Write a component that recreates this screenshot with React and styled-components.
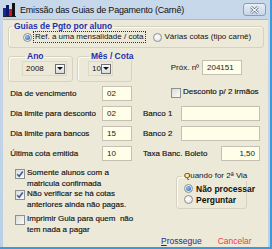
import styled, { createGlobalStyle } from 'styled-components'

const GlobalStyle = createGlobalStyle`
  html, body {
    margin: 0;
    padding: 0;
    overflow: hidden;
    font-family: 'Liberation Sans', Arial, sans-serif;
  }
`

const Window = styled.div`
  width: 272px;
  height: 249px;
  box-sizing: border-box;
  background: linear-gradient(#c8d8eb, #bccfe6);
  border-right: 2px solid #3f98d8;
  border-bottom: 2px solid #3f98d8;
  display: flex;
  flex-direction: column;
  overflow: hidden;
`

const TitleBar = styled.div`
  height: 19px;
  flex-shrink: 0;
  display: flex;
  align-items: center;
  padding-left: 3px;
`

const Caption = styled.span`
  margin-left: 4px;
  font-size: 9px;
  letter-spacing: -0.2px;
  color: #111;
`

const CloseButton = styled.div`
  margin-left: auto;
  margin-right: 4px;
  width: 21px;
  height: 11px;
  border: 1px solid #8c9db3;
  border-radius: 3px;
  background: linear-gradient(#e6eef7, #c7d5e7);
  display: flex;
  align-items: center;
  justify-content: center;
`

const Body = styled.div`
  flex: 1;
  min-height: 0;
  margin: 0 2px 0 3px;
  background: #ece9d8;
  border-top: 1px solid #aab9cc;
  padding: 1px 4px 0 5px;
  display: flex;
  flex-direction: column;
  font-size: 8px;
  color: #111;
  white-space: nowrap;
`

const Group = styled.fieldset`
  margin: 0;
  padding: 0;
  border: 1px solid #d6d2c3;
  border-radius: 3px;
  box-shadow: inset 1px 1px 0 #fbfaf5;
  min-width: 0;
`

const Legend = styled.legend`
  padding: 0 2px;
  margin-left: ${(p) => p.$offset ?? 3}px;
  font-size: ${(p) => (p.$blue ? '8.5px' : '8px')};
  font-weight: ${(p) => (p.$blue ? 'bold' : 'normal')};
  color: ${(p) => (p.$blue ? '#1d2fb0' : '#111')};
  line-height: 10px;
  white-space: nowrap;
`

const RadioRow = styled.div`
  display: flex;
  align-items: center;
  padding: 0 0 4px 14px;
  height: 12px;
`

const RadioItem = styled.label`
  display: flex;
  align-items: center;
  margin-left: ${(p) => p.$gap || 0}px;
  font-weight: ${(p) => (p.$bold ? 'bold' : 'normal')};
  font-size: ${(p) => (p.$bold ? '8.5px' : '8px')};
  height: 11px;
`

const Circle = styled.span`
  width: 9px;
  height: 9px;
  border-radius: 50%;
  border: 1px solid #8e8f8f;
  background: radial-gradient(circle at 40% 40%, #ffffff, #dcdcdc);
  box-sizing: border-box;
  display: flex;
  align-items: center;
  justify-content: center;
  flex-shrink: 0;
  &::after {
    content: '';
    width: 5px;
    height: 5px;
    border-radius: 50%;
    background: ${(p) => (p.$on ? 'radial-gradient(circle at 40% 40%, #8fc3f5, #1e5bb8)' : 'transparent')};
  }
`

const RadioText = styled.span`
  margin-left: 2px;
  padding: 0 1px;
  line-height: 10px;
  outline: ${(p) => (p.$focus ? '1px dotted #333' : 'none')};
`

const TopRow = styled.div`
  display: flex;
  align-items: flex-start;
  margin-top: 3px;
`

const SmallGroup = styled(Group)`
  width: ${(p) => p.$w}px;
  margin-left: ${(p) => p.$ml || 0}px;
  box-sizing: border-box;
  padding: 0 0 5px ${(p) => p.$pl}px;
`

const Combo = styled.div`
  width: ${(p) => p.$w}px;
  height: 15px;
  box-sizing: border-box;
  display: flex;
  align-items: center;
  padding-left: 3px;
  border: 1px solid #ddd9c9;
  font-size: 8px;
`

const DropButton = styled.span`
  margin-left: auto;
  margin-right: 1px;
  width: 10px;
  height: 10px;
  box-sizing: border-box;
  border: 1px solid #6f6f6f;
  background: linear-gradient(#fdfdfd, #d9d9d9);
  display: flex;
  align-items: center;
  justify-content: center;
  &::after {
    content: '';
    border-left: 3px solid transparent;
    border-right: 3px solid transparent;
    border-top: 3px solid #111;
  }
`

const NextNumber = styled.div`
  margin-left: auto;
  margin-right: 22px;
  margin-top: 9px;
  display: flex;
  align-items: center;
  gap: 3px;
`

const Input = styled.div`
  width: ${(p) => p.$w}px;
  height: 15px;
  box-sizing: border-box;
  border: 1px solid #c4c1b2;
  background: #fffee8;
  display: flex;
  align-items: center;
  justify-content: ${(p) => (p.$right ? 'flex-end' : 'flex-start')};
  padding: 0 4px;
  font-size: 8px;
  color: #222;
  flex-shrink: 0;
`

const Rows = styled.div`
  display: flex;
  flex-direction: column;
  margin-top: 1px;
`

const Row = styled.div`
  height: 20px;
  display: flex;
  align-items: center;
`

const Label = styled.span`
  width: ${(p) => p.$w}px;
  flex-shrink: 0;
  -webkit-text-stroke: 0.15px #111;
`

const RightCell = styled.div`
  margin-left: 11px;
  width: 117px;
  display: flex;
  align-items: center;
  padding-left: ${(p) => p.$pl || 0}px;
  box-sizing: border-box;
`

const Box = styled.span`
  width: 10px;
  height: 10px;
  box-sizing: border-box;
  border: 1px solid #8e8f8f;
  background: linear-gradient(135deg, #dcdcd6, #fbfbf8);
  flex-shrink: 0;
  display: flex;
  align-items: center;
  justify-content: center;
`

const Bottom = styled.div`
  display: flex;
  margin-top: 6px;
`

const Checks = styled.div`
  display: flex;
  flex-direction: column;
  padding-left: 7px;
  width: 150px;
`

const CheckItem = styled.div`
  display: flex;
  align-items: flex-start;
  margin-top: ${(p) => p.$mt}px;
`

const CheckText = styled.span`
  margin-left: 2px;
  line-height: 10.5px;
  margin-top: -1px;
  -webkit-text-stroke: 0.15px #111;
`

const Side = styled.div`
  display: flex;
  flex-direction: column;
  margin-left: 11px;
  padding-top: 2px;
`

const ViaGroup = styled(Group)`
  width: 71px;
  box-sizing: border-box;
  padding: 2px 0 3px 7px;
  overflow: visible;
`

const Actions = styled.div`
  display: flex;
  gap: 16px;
  margin-top: 27px;
  margin-left: -15px;
  font-size: 8.5px;
`

const Action = styled.span`
  color: ${(p) => p.$color};
  & u {
    text-decoration: underline;
  }
`

const Check = ({ on }) => (
  <Box>
    {on && (
      <svg width="8" height="8" viewBox="0 0 8 8">
        <path d="M1.2 4.2 L3.2 6.2 L6.8 1.5" fill="none" stroke="#3d5aa8" strokeWidth="1.6" />
      </svg>
    )}
  </Box>
)

const AppIcon = () => (
  <svg width="13" height="14" viewBox="0 0 13 14">
    <rect x="0" y="5" width="3" height="9" fill="#1a2a8c" />
    <rect x="3" y="2" width="3" height="12" fill="#0c1770" />
    <rect x="6" y="6" width="3" height="8" fill="#d11a1a" />
    <rect x="9" y="0" width="3" height="14" fill="#111" />
    <rect x="0" y="13" width="13" height="1" fill="#222" />
  </svg>
)

const CloseGlyph = () => (
  <svg width="9" height="8" viewBox="0 0 9 8">
    <path d="M1 1 L8 7 M8 1 L1 7" stroke="#5d6b7e" strokeWidth="2.6" />
    <path d="M1 1 L8 7 M8 1 L1 7" stroke="#fff" strokeWidth="1.1" />
  </svg>
)

export default function App() {
  return (
    <>
      <GlobalStyle />
      <Window>
        <TitleBar>
          <AppIcon />
          <Caption>Emissão das Guias de Pagamento (Carnê)</Caption>
          <CloseButton>
            <CloseGlyph />
          </CloseButton>
        </TitleBar>
        <Body>
          <Group>
            <Legend $blue>Guias de Pgto por aluno</Legend>
            <RadioRow>
              <RadioItem>
                <Circle $on />
                <RadioText $focus>Ref. a uma mensalidade / cota</RadioText>
              </RadioItem>
              <RadioItem $gap={8}>
                <Circle />
                <RadioText>Várias cotas (tipo carnê)</RadioText>
              </RadioItem>
            </RadioRow>
          </Group>

          <TopRow>
            <SmallGroup $w={65} $pl={13}>
              <Legend $blue>Ano</Legend>
              <Combo $w={45}>
                2008
                <DropButton />
              </Combo>
            </SmallGroup>
            <SmallGroup $w={55} $ml={4} $pl={10}>
              <Legend $blue $offset={1}>Mês / Cota</Legend>
              <Combo $w={25}>
                10
                <DropButton />
              </Combo>
            </SmallGroup>
            <NextNumber>
              <span>Próx. nº</span>
              <Input $w={40}>204151</Input>
            </NextNumber>
          </TopRow>

          <Rows>
            <Row>
              <Label $w={94}>&nbsp;Dia de vencimento</Label>
              <Input $w={30}>02</Input>
              <RightCell $pl={28}>
                <Check />
                <CheckText>Desconto p/ 2 irmãos</CheckText>
              </RightCell>
            </Row>
            <Row>
              <Label $w={94}>&nbsp;Dia limite para desconto</Label>
              <Input $w={30}>02</Input>
              <RightCell>
                <Label $w={38}>Banco 1</Label>
                <Input $w={79} />
              </RightCell>
            </Row>
            <Row>
              <Label $w={94}>&nbsp;Dia limite para bancos</Label>
              <Input $w={30}>15</Input>
              <RightCell>
                <Label $w={38}>Banco 2</Label>
                <Input $w={79} />
              </RightCell>
            </Row>
            <Row>
              <Label $w={94}>&nbsp;Última cota emitida</Label>
              <Input $w={30}>10</Input>
              <RightCell>
                <Label $w={78}>Taxa Banc. Boleto</Label>
                <Input $w={39} $right>1,50</Input>
              </RightCell>
            </Row>
          </Rows>

          <Bottom>
            <Checks>
              <CheckItem $mt={0}>
                <Check on />
                <CheckText>
                  Somente alunos com a<br />matricula confirmada
                </CheckText>
              </CheckItem>
              <CheckItem $mt={1}>
                <Check on />
                <CheckText>
                  Não verificar se há cotas<br />anteriores ainda não pagas.
                </CheckText>
              </CheckItem>
              <CheckItem $mt={5}>
                <Check />
                <CheckText>
                  Imprimir Guia para quem&nbsp; não<br />tem nada a pagar
                </CheckText>
              </CheckItem>
            </Checks>
            <Side>
              <ViaGroup>
                <Legend $offset={-2}>Quando for 2ª Via</Legend>
                <RadioItem $bold>
                  <Circle $on />
                  <RadioText>Não processar</RadioText>
                </RadioItem>
                <RadioItem $bold>
                  <Circle />
                  <RadioText>Perguntar</RadioText>
                </RadioItem>
              </ViaGroup>
              <Actions>
                <Action $color="#1f2a8a">
                  <u>P</u>rossegue
                </Action>
                <Action $color="#f03c3c">Cancelar</Action>
              </Actions>
            </Side>
          </Bottom>
        </Body>
      </Window>
    </>
  )
}
